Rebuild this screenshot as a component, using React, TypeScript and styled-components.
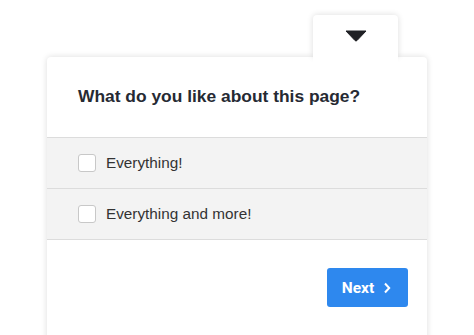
import React from "react";
import styled, { createGlobalStyle } from "styled-components";

const Global = createGlobalStyle`
  html, body { margin: 0; padding: 0; background: #ffffff; }
  body { font-family: "Liberation Sans", Arial, sans-serif; overflow: hidden; }
`;

const Page = styled.div`
  width: 474px;
  height: 335px;
  box-sizing: border-box;
  padding: 15px 0 0 47px;
  overflow: hidden;
`;

const Widget = styled.div`
  width: 380px;
  display: flex;
  flex-direction: column;
`;

const TabRow = styled.div`
  display: flex;
  justify-content: flex-end;
  padding-right: 29px;
`;

const Tab = styled.div`
  position: relative;
  width: 85px;
  height: 42px;
  background: #fff;
  border-radius: 4px 4px 0 0;
  box-shadow: 0 0 6px rgba(0, 0, 0, 0.14);
  display: flex;
  align-items: center;
  justify-content: center;
  z-index: 2;
  &::after {
    content: "";
    position: absolute;
    left: 0;
    right: 0;
    bottom: -8px;
    height: 10px;
    background: #fff;
  }
`;

const Card = styled.div`
  position: relative;
  background: #fff;
  border-radius: 4px 4px 0 0;
  box-shadow: 0 0 6px rgba(0, 0, 0, 0.14);
  height: 300px;
  z-index: 1;
`;

const Title = styled.h2`
  margin: 0;
  padding: 30px 30px 31px 31px;
  font-size: 17.4px;
  line-height: 19px;
  font-weight: 700;
  color: #262a33;
  border-bottom: 1px solid #dcdcdc;
`;

const Option = styled.label`
  display: flex;
  align-items: center;
  gap: 10px;
  height: 50px;
  padding-left: 31px;
  background: #f3f3f3;
  border-bottom: 1px solid #dcdcdc;
  font-size: 15.3px;
  color: #333;
`;

const Box = styled.span`
  width: 16px;
  height: 16px;
  border: 1px solid #c8c8c8;
  border-radius: 3px;
  background: #fff;
  flex: none;
`;

const Footer = styled.div`
  display: flex;
  justify-content: flex-end;
  padding: 28px 19px 0 0;
`;

const NextButton = styled.button`
  display: flex;
  align-items: center;
  justify-content: center;
  gap: 9px;
  width: 81px;
  height: 39px;
  border: none;
  border-radius: 3px;
  background: #2e88ee;
  color: #fff;
  font-family: Roboto, "Liberation Sans", sans-serif;
  font-weight: 700;
  font-size: 15.5px;
  padding: 0 2px 0 0;
`;

export default function App() {
  return (
    <>
      <Global />
      <Page>
        <Widget>
          <TabRow>
            <Tab>
              <svg width="22" height="12" viewBox="0 0 22 12">
                <path d="M1 1 H21 L12 10.5 Q11 11.5 10 10.5 Z" fill="#1f2024" stroke="#1f2024" strokeWidth="1" strokeLinejoin="round" />
              </svg>
            </Tab>
          </TabRow>
          <Card>
            <Title>What do you like about this page?</Title>
            <Option>
              <Box />
              Everything!
            </Option>
            <Option>
              <Box />
              Everything and more!
            </Option>
            <Footer>
              <NextButton>
                Next
                <svg width="8" height="12" viewBox="0 0 8 12">
                  <path d="M2 1.5 L6.2 6 L2 10.5" fill="none" stroke="#fff" strokeWidth="2" />
                </svg>
              </NextButton>
            </Footer>
          </Card>
        </Widget>
      </Page>
    </>
  );
}
